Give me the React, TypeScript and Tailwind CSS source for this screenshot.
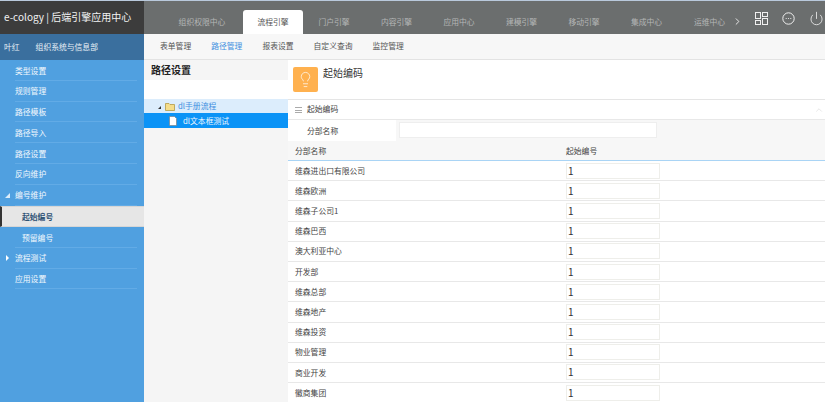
import { Lightbulb, Power, ChevronRight, ChevronUp } from "lucide-react";

const font = { fontFamily: '"Noto Sans CJK SC", "Liberation Sans", sans-serif' };
const tabs = ["组织权限中心", "流程引擎", "门户引擎", "内容引擎", "应用中心", "建模引擎", "移动引擎", "集成中心", "运维中心"];
const tabWidths = [99, 60, 62, 63, 62, 63, 62, 63, 55];
const subs = ["表单管理", "路径管理", "报表设置", "自定义查询", "监控管理"];
const rows = ["维森进出口有限公司", "维森欧洲", "维森子公司1", "维森巴西", "澳大利亚中心", "开发部", "维森总部", "维森地产", "维森投资", "物业管理", "商业开发", "徽商集团"];

function SideItem({ label, arrow, sub, active }: { label: string; arrow?: "down" | "right"; sub?: boolean; active?: boolean }) {
  if (active) {
    return (
      <div className="flex h-[21.5px] items-center border-y border-l-2 border-y-[#d6d6d6] border-l-[#333333] bg-[#e6e6e6] pl-[20px] pt-[1px] font-bold text-[#2f5375]">
        {label}
      </div>
    );
  }
  return (
    <div className={`relative ml-[15px] mr-[7px] flex h-[20.8px] items-center border-b border-[#62abe6] pt-[1px] text-[#f2f8fd] ${sub ? "pl-[7px]" : ""}`}>
      {arrow === "down" && <span className="absolute left-[-10px] top-[8px] h-0 w-0 border-b-[5px] border-l-[5px] border-b-[#dcecfa] border-l-transparent" />}
      {arrow === "right" && <span className="absolute left-[-9px] top-[7px] h-0 w-0 border-y-[3px] border-l-[3px] border-y-transparent border-l-white" />}
      {label}
    </div>
  );
}

export default function App() {
  return (
    <div style={font} className="flex h-[402px] w-[825px] flex-col overflow-hidden bg-white text-[7.8px] leading-none text-[#444444]">
      <div className="flex h-[34px] shrink-0 border-t border-[#b9c9dc] bg-[#6b6e6e]">
        <div className="flex w-[144px] shrink-0 items-center bg-[#3c3c3c] pb-[2px] pl-[4px] text-[10px] text-[#f2f2f2]">e-cology | 后端引擎应用中心</div>
        <div className="flex w-[589px] items-end overflow-hidden">
          {tabs.map((t, i) => (
            <div
              key={t}
              style={{ width: tabWidths[i] }}
              className={`flex h-[24px] shrink-0 items-center justify-center ${i === 1 ? "rounded-t-[3px] bg-white text-[#555555]" : "text-[#b4b6b6]"} ${i === 0 ? "pl-[17px]" : ""} ${i === 8 ? "pl-[8px]" : ""}`}
            >
              {t}
            </div>
          ))}
        </div>
        <div className="relative flex-1 text-[#f0f0f0]">
          <ChevronRight size={11} strokeWidth={2} className="absolute left-[-1px] top-[15px]" />
          <svg width="13" height="13" viewBox="0 0 13 13" fill="none" stroke="currentColor" strokeWidth="1" className="absolute left-[22px] top-[11px]">
            <rect x="0.5" y="0.5" width="5" height="6" />
            <rect x="7.5" y="0.5" width="5" height="4" />
            <rect x="0.5" y="8.5" width="5" height="4" />
            <rect x="7.5" y="6.5" width="5" height="6" />
          </svg>
          <svg width="13" height="13" viewBox="0 0 13 13" fill="none" className="absolute left-[49px] top-[11px]">
            <circle cx="6.5" cy="6.5" r="5.7" stroke="currentColor" strokeWidth="1" />
            <circle cx="4.2" cy="6.5" r="0.6" fill="currentColor" />
            <circle cx="6.5" cy="6.5" r="0.6" fill="currentColor" />
            <circle cx="8.8" cy="6.5" r="0.6" fill="currentColor" />
          </svg>
          <Power size={15} strokeWidth={1.3} className="absolute left-[76px] top-[10px]" />
        </div>
      </div>

      <div className="flex min-h-0 flex-1">
        <aside className="flex w-[144px] shrink-0 flex-col bg-[#50a0e0]">
          <div className="flex h-[26px] shrink-0 items-center gap-[16px] bg-[#3a6f9e] pb-[1px] pl-[4px] text-[#e8f0f7]">
            <span>叶红</span>
            <span>组织系统与信息部</span>
          </div>
          <SideItem label="类型设置" />
          <SideItem label="规则管理" />
          <SideItem label="路径模板" />
          <SideItem label="路径导入" />
          <SideItem label="路径设置" />
          <SideItem label="反向维护" />
          <SideItem label="编号维护" arrow="down" />
          <SideItem label="起始编号" active />
          <SideItem label="预留编号" sub />
          <SideItem label="流程测试" arrow="right" />
          <SideItem label="应用设置" />
        </aside>

        <div className="flex min-w-0 flex-1 flex-col">
          <nav className="flex h-[26px] shrink-0 items-center gap-[20px] border-b border-[#e3e3e3] bg-[#f7f7f7] pb-[1px] pl-[16px] text-[#555555]">
            {subs.map((s, i) => (
              <span key={s} className={i === 1 ? "text-[#3f8fe0]" : ""}>{s}</span>
            ))}
          </nav>
          <div className="flex min-h-0 flex-1">
            <div className="w-[144px] shrink-0 bg-[#f5f5f5]">
              <div className="flex h-[20px] items-center pl-[7px] text-[10px] font-bold text-[#222222]">路径设置</div>
              <div className="h-[19px] bg-white" />
              <div className="relative flex h-[14px] items-center bg-[#dcedfc] pl-[34px] text-[#3f8fe0]">
                <span className="absolute left-[14px] top-[7px] h-0 w-0 border-b-[3px] border-l-[3px] border-b-[#333333] border-l-transparent" />
                <svg width="10" height="9" viewBox="0 0 10 9" className="absolute left-[21px] top-[3px]">
                  <path d="M0.5 1.5h3.5l1 1h4.5v6h-9z" fill="#f5dd8a" stroke="#b49a45" strokeWidth="0.8" />
                </svg>
                dl手册流程
              </div>
              <div className="relative flex h-[15px] items-center bg-[#0b93f6] pl-[39px] text-[#eef7ff]">
                <svg width="8" height="10" viewBox="0 0 8 10" className="absolute left-[25px] top-[3px]">
                  <path d="M0.5 0.5h5l2 2v7h-7z" fill="#ffffff" stroke="#777777" strokeWidth="0.6" />
                </svg>
                dl文本框测试
              </div>
            </div>

            <main className="min-w-0 flex-1">
              <div className="flex h-[40px] items-start gap-[5px] border-b border-[#e5e5e5] pl-[5px] pt-[7px]">
                <div className="flex h-[25px] w-[25px] items-center justify-center rounded-[2px] bg-[#ffb14f]">
                  <Lightbulb size={17} strokeWidth={1} className="text-white" />
                </div>
                <span className="pt-[1px] text-[10px] text-[#333333]">起始编码</span>
              </div>
              <div className="relative flex h-[20px] items-center border-b border-[#e8e8e8] pb-[1px] pl-[19px]">
                <span className="absolute left-[7px] top-[7px] h-[6px] w-[7px] border-y border-[#aaaaaa] after:absolute after:left-0 after:top-[1.5px] after:h-px after:w-full after:bg-[#aaaaaa]" />
                起始编码
                <ChevronUp size={10} strokeWidth={1} className="absolute right-[1px] top-[5px] text-[#c8c8c8]" />
              </div>
              <div className="flex h-[21px] bg-[#f7f7f7]">
                <div className="flex w-[108px] items-center bg-white pl-[19px]">分部名称</div>
                <div className="ml-[3px] mt-[2px] h-[16px] w-[258px] border border-[#eeeeee] bg-white" />
              </div>
              <div className="flex h-[20px] items-center border-b border-[#a9d4f5] bg-[#f7f7f7] pl-[7px]">
                <span className="w-[271px]">分部名称</span>
                <span>起始编号</span>
              </div>
              {rows.map((r) => (
                <div key={r} className="flex h-[20.2px] items-center border-b border-[#e8e8e8] bg-white pl-[7px]">
                  <span className="w-[271px] shrink-0">{r}</span>
                  <div className="flex h-[16px] w-[94px] items-center border border-[#eeeeea] bg-white pl-[1px] text-[10px] text-[#333333]">1</div>
                </div>
              ))}
            </main>
          </div>
        </div>
      </div>
    </div>
  );
}
